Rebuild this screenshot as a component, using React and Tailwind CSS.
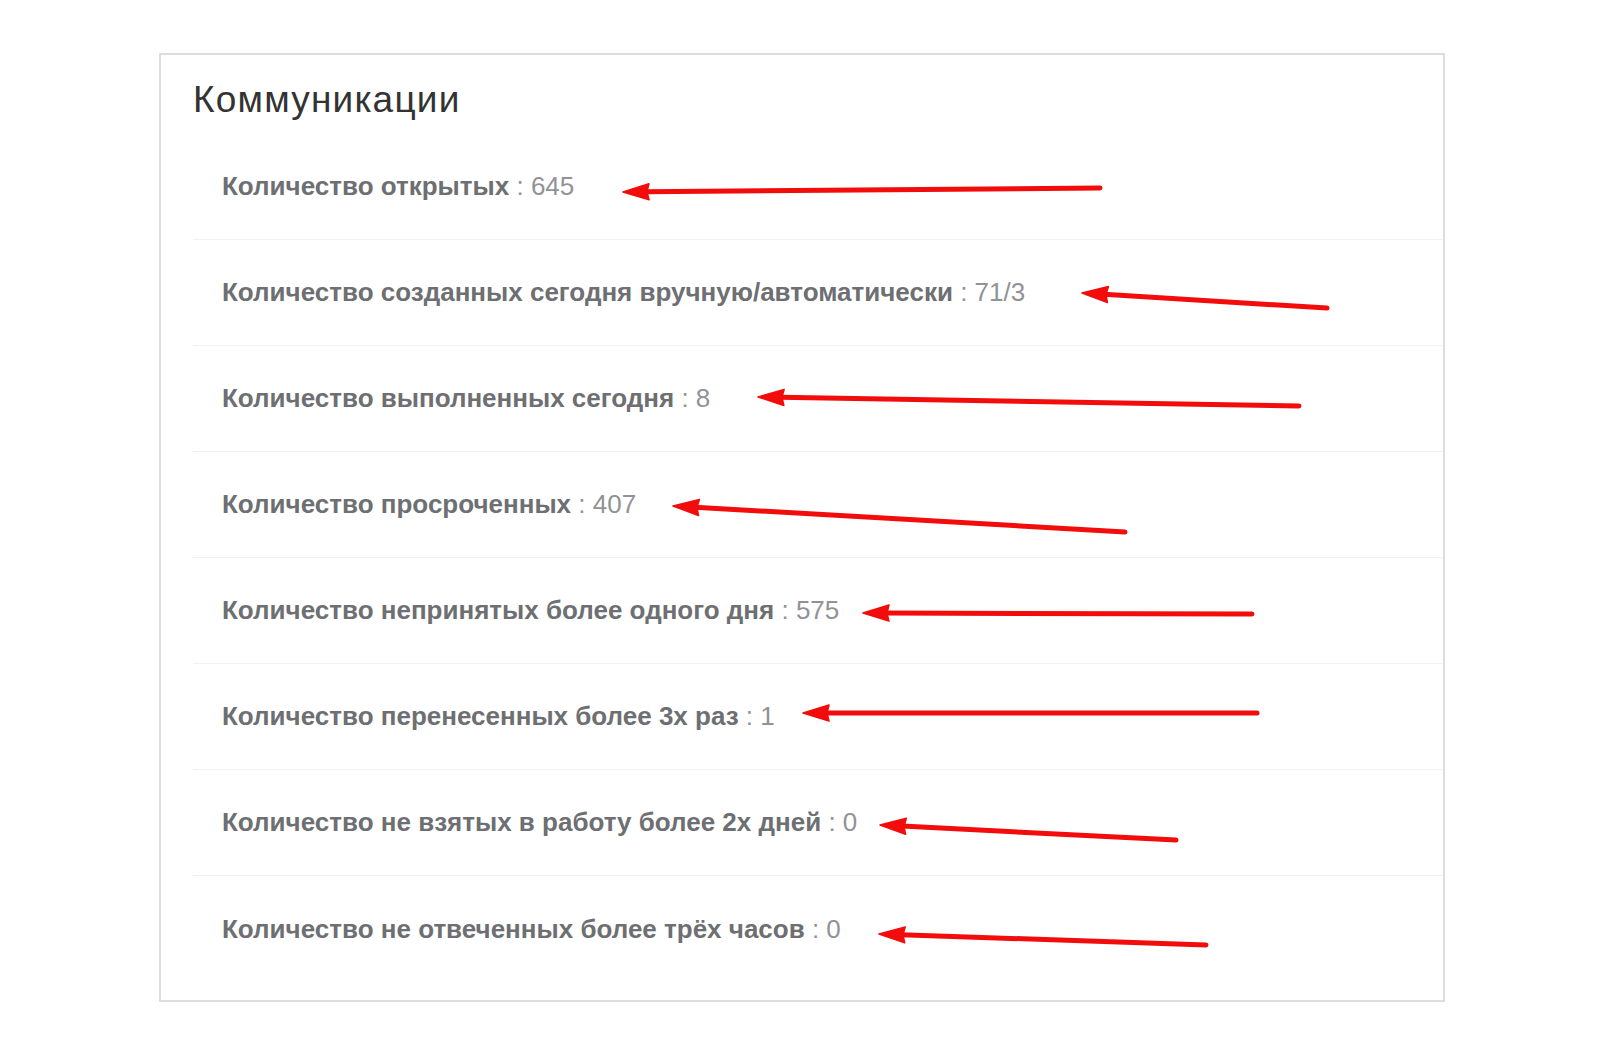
import React from "react";

const rows = [
  { label: "Количество открытых", value: "645" },
  { label: "Количество созданных сегодня вручную/автоматически", value: "71/3" },
  { label: "Количество выполненных сегодня", value: "8" },
  { label: "Количество просроченных", value: "407" },
  { label: "Количество непринятых более одного дня", value: "575" },
  { label: "Количество перенесенных более 3х раз", value: "1" },
  { label: "Количество не взятых в работу более 2х дней", value: "0" },
  { label: "Количество не отвеченных более трёх часов", value: "0" },
];

// Hand-drawn annotation arrows: [tailX, tailY, tipX, tipY]
const arrows = [
  [1100, 188, 623, 192],
  [1327, 308, 1082, 293],
  [1299, 406, 758, 397],
  [1125, 532, 673, 506],
  [1252, 614, 863, 613],
  [1257, 713, 803, 713],
  [1176, 840, 880, 825],
  [1206, 945, 879, 934],
];

function Arrow({ a }) {
  const [tx, ty, hx, hy] = a;
  const dx = tx - hx;
  const dy = ty - hy;
  const len = Math.hypot(dx, dy);
  const ux = dx / len;
  const uy = dy / len;
  const headLen = 26;
  const half = 8;
  const bx = hx + ux * headLen;
  const by = hy + uy * headLen;
  const px = -uy * half;
  const py = ux * half;
  const sx = hx + ux * (headLen - 4);
  const sy = hy + uy * (headLen - 4);
  return (
    <g>
      <line x1={tx} y1={ty} x2={sx} y2={sy} stroke="#f20c0c" strokeWidth="5" strokeLinecap="round" />
      <polygon
        points={`${hx},${hy} ${bx + px},${by + py} ${bx - ux * 2},${by - uy * 2} ${bx - px},${by - py}`}
        fill="#f20c0c"
        stroke="#f20c0c"
        strokeWidth="1.5"
        strokeLinejoin="round"
      />
    </g>
  );
}

export default function App() {
  return (
    <div
      className="relative w-[1600px] h-[1050px] bg-white pt-[53px] pl-[159px]"
      style={{ fontFamily: '"Liberation Sans", Arial, sans-serif' }}
    >
      <div className="w-[1286px] h-[949px] border-2 border-[#dddddd] bg-white pt-[25px] pl-[32px]">
        <h2 className="text-[37px] leading-[40px] tracking-[1.2px] text-[#333333] font-normal">Коммуникации</h2>
        <ul className="mt-[14px]">
          {rows.map((r, i) => (
            <li
              key={i}
              className={
                "h-[106px] flex items-center pl-[29px] text-[26px] " +
                (i < rows.length - 1 ? "border-b border-[#f1f1f1]" : "")
              }
            >
              <span className="font-bold text-[#6d6f72]">{r.label}</span>
              <span className="text-[#909295]">&nbsp;:&nbsp;{r.value}</span>
            </li>
          ))}
        </ul>
      </div>
      <svg className="absolute left-0 top-0 pointer-events-none" width="1600" height="1050">
        {arrows.map((a, i) => (
          <Arrow key={i} a={a} />
        ))}
      </svg>
    </div>
  );
}
